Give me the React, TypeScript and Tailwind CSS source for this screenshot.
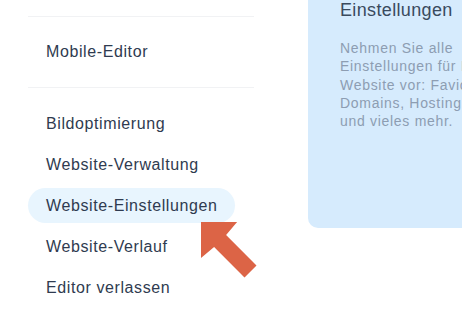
const menuTop = ["Mobile-Editor"];

const menuItems = [
  "Bildoptimierung",
  "Website-Verwaltung",
  "Website-Einstellungen",
  "Website-Verlauf",
  "Editor verlassen",
];

const ACTIVE = "Website-Einstellungen";

export default function App() {
  return (
    <div
      className="relative w-[462px] h-[334px] overflow-hidden bg-white flex"
      style={{ fontFamily: '"Liberation Sans", Arial, sans-serif' }}
    >
      {/* ── Left menu ── */}
      <div className="ml-[28px] w-[226px] shrink-0 flex flex-col pt-[16px]">
        <div className="h-px bg-[#f1f2f4]" />
        {menuTop.map((m) => (
          <div
            key={m}
            className="h-[70px] flex items-center pl-[18px] text-[16px] tracking-[0.6px] text-[#2f3b50] whitespace-nowrap"
          >
            {m}
          </div>
        ))}
        <div className="h-px bg-[#f1f2f4]" />

        <div className="pt-[15px] flex flex-col">
          {menuItems.map((m) => (
            <div key={m} className="h-[41px] flex items-center">
              <div
                className={`h-[35px] flex items-center pl-[18px] pr-[17px] rounded-full text-[16px] tracking-[0.6px] text-[#2f3b50] whitespace-nowrap ${
                  m === ACTIVE ? "bg-[#e8f5fe]" : ""
                }`}
              >
                {m}
              </div>
            </div>
          ))}
        </div>
      </div>

      {/* ── Info card ── */}
      <div className="ml-[54px] w-[200px] h-[228px] shrink-0 bg-[#d6ebfd] rounded-bl-[10px] pl-[32px]">
        <div className="text-[18px] leading-[20px] tracking-[0.35px] text-[#3a4a5e] whitespace-nowrap">
          Einstellungen
        </div>
        <div className="mt-[19px] text-[14px] leading-[18.3px] tracking-[0.7px] text-[#8d9db2] whitespace-nowrap">
          <div>Nehmen Sie alle</div>
          <div>Einstellungen für Ihre</div>
          <div>Website vor: Favicons,</div>
          <div>Domains, Hosting</div>
          <div>und vieles mehr.</div>
        </div>
      </div>

      {/* Pointer arrow */}
      <svg
        className="absolute left-[195px] top-[215px]"
        width="70"
        height="66"
        viewBox="0 0 70 66"
      >
        <polygon
          points="6,7 42.1,7 31.1,20.1 61.5,50.5 49.5,62.5 19.1,32.1 6,43.1"
          fill="#dc6446"
        />
      </svg>
    </div>
  );
}
